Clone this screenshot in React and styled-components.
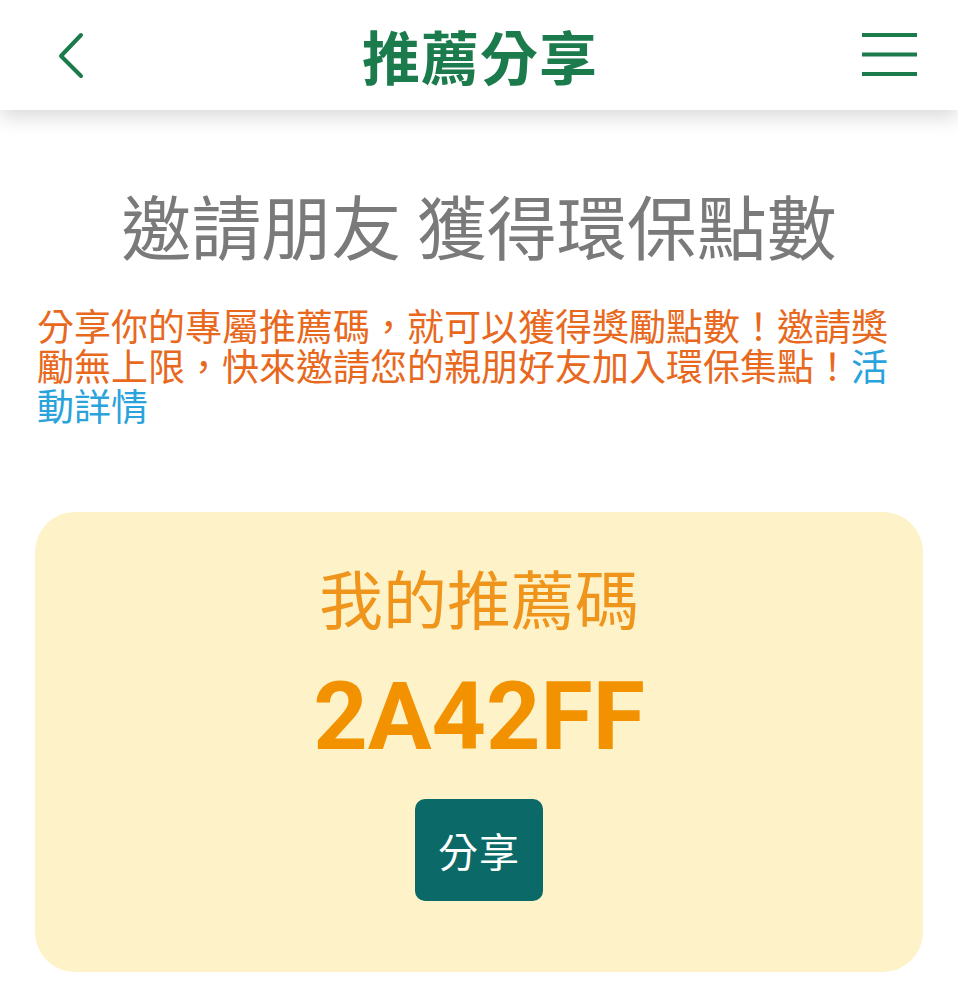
import styled, { createGlobalStyle } from "styled-components";

const GlobalStyle = createGlobalStyle`
  body {
    margin: 0;
    background: #ffffff;
    font-family: "Noto Sans CJK TC", "Noto Sans", sans-serif;
  }
`;

const Header = styled.header`
  display: flex;
  align-items: center;
  justify-content: space-between;
  height: 110px;
  padding: 0 40px 0 50px;
  background: #ffffff;
  box-shadow: 0 8px 18px rgba(0, 0, 0, 0.14);
  position: relative;
  z-index: 1;

  .title {
    font-size: 58px;
    font-weight: 700;
    color: #1b7b4c;
    letter-spacing: 1px;
    margin-left: 8px;
  }
`;

const IconButton = styled.button`
  display: flex;
  align-items: center;
  justify-content: center;
  background: none;
  border: none;
  padding: 0;
  width: ${(p) => p.w}px;
  height: 60px;
  color: #1b7b4c;
`;

const Body = styled.main`
  padding: 75px 37px 40px;
`;

const Heading = styled.h1`
  margin: 0;
  text-align: center;
  font-size: 70px;
  font-weight: 400;
  line-height: 80px;
  color: #7a7a7a;
`;

const Intro = styled.p`
  margin: 40px 0 0;
  font-size: 37px;
  line-height: 40px;
  color: #e8691e;

  a {
    color: #2aa3dc;
    text-decoration: none;
  }
`;

const Card = styled.section`
  margin: 87px -2px 0;
  padding: 44px 20px 71px;
  background: #fef2c8;
  border-radius: 40px;
  display: flex;
  flex-direction: column;
  align-items: center;
`;

const CardTitle = styled.div`
  font-size: 64px;
  line-height: 80px;
  color: #f0951c;
`;

const Code = styled.div`
  margin-top: 26px;
  font-family: Roboto, "Liberation Sans", sans-serif;
  font-weight: 700;
  font-size: 95px;
  line-height: 110px;
  color: #f39200;
`;

const ShareButton = styled.button`
  margin-top: 27px;
  width: 128px;
  height: 102px;
  border: none;
  border-radius: 10px;
  background: #0b6a68;
  color: #ffffff;
  font-family: "Noto Sans CJK TC", sans-serif;
  font-size: 40px;
  letter-spacing: 1px;
`;

export default function App() {
  return (
    <>
      <GlobalStyle />
      <Header>
        <IconButton w={40} aria-label="back">
          <svg width="34" height="48" viewBox="0 0 34 48" fill="none">
            <path d="M28 4 L8 25 L28 45" stroke="currentColor" strokeWidth="4" strokeLinecap="round" strokeLinejoin="round" />
          </svg>
        </IconButton>
        <span className="title">推薦分享</span>
        <IconButton w={56} aria-label="menu">
          <svg width="56" height="48" viewBox="0 0 56 48">
            <rect x="0" y="2" width="55" height="4" fill="currentColor" />
            <rect x="0" y="21.5" width="55" height="4" fill="currentColor" />
            <rect x="0" y="41" width="55" height="4" fill="currentColor" />
          </svg>
        </IconButton>
      </Header>
      <Body>
        <Heading>邀請朋友 獲得環保點數</Heading>
        <Intro>
          分享你的專屬推薦碼，就可以獲得獎勵點數！邀請獎勵無上限，快來邀請您的親朋好友加入環保集點！
          <a href="#">活動詳情</a>
        </Intro>
        <Card>
          <CardTitle>我的推薦碼</CardTitle>
          <Code>2A42FF</Code>
          <ShareButton>分享</ShareButton>
        </Card>
      </Body>
    </>
  );
}
